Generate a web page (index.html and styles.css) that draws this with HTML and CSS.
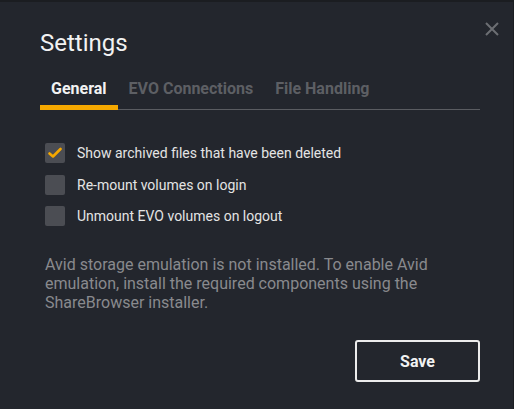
FILE: index.html
```html
<!DOCTYPE html>
<html lang="en">
<head>
  <meta charset="UTF-8">
  <title>Settings</title>
  <link rel="stylesheet" href="styles.css">
</head>
<body>

  <div class="dialog">
    <button class="close-btn" aria-label="Close">
      <svg width="14" height="14" viewBox="0 0 14 14"><path d="M1 1L13 13M13 1L1 13" stroke="#6c6e73" stroke-width="2" fill="none"/></svg>
    </button>

    <h1>Settings</h1>

    <!-- Tabs -->
    <div class="tabs">
      <span class="tab active">General</span>
      <span class="tab">EVO Connections</span>
      <span class="tab">File Handling</span>
    </div>

    <!-- Options -->
    <div class="options">
      <label class="option">
        <span class="box checked">
          <svg width="14" height="12" viewBox="0 0 14 12"><path d="M1.5 6.5L5 9.5L12.5 2" stroke="#f5a800" stroke-width="2.6" fill="none" stroke-linecap="round" stroke-linejoin="round"/></svg>
        </span>
        Show archived files that have been deleted
      </label>
      <label class="option"><span class="box"></span>Re-mount volumes on login</label>
      <label class="option"><span class="box"></span>Unmount EVO volumes on logout</label>
    </div>

    <p class="note">Avid storage emulation is not installed. To enable Avid emulation, install the required components using the ShareBrowser installer.</p>

    <div class="footer">
      <button class="save-btn">Save</button>
    </div>
  </div>

</body>
</html>
```

FILE: styles.css
```css
body {
  margin: 0;
  background: #1b1d21;
  font-family: Roboto, "Liberation Sans", sans-serif;
  width: 514px;
  height: 409px;
  overflow: hidden;
}
.dialog {
  position: relative;
  margin-top: 2px;
  width: 513px;
  height: 407px;
  background: #23262d;
  padding: 26px 33px 0 40px;
  box-sizing: border-box;
}
.close-btn {
  position: absolute;
  top: 20px;
  right: 14px;
  background: none;
  border: none;
  padding: 0;
  cursor: pointer;
}
h1 {
  margin: 0;
  font-size: 24px;
  font-weight: 400;
  color: #f2f2f2;
  line-height: 30px;
}
.tabs {
  display: flex;
  gap: 22px;
  margin-top: 21px;
  border-bottom: 1px solid #5a5c61;
  padding-left: 11px;
}
.tab {
  font-size: 16px;
  font-weight: 700;
  color: #5d5f64;
  padding-bottom: 10px;
  line-height: 20px;
}
.tab.active {
  color: #f2f2f2;
  position: relative;
}
.tab.active::after {
  content: "";
  position: absolute;
  left: -11px;
  right: -11px;
  bottom: -1px;
  height: 5px;
  background: #f5a800;
}
.options {
  display: flex;
  flex-direction: column;
  gap: 11.5px;
  margin-top: 33px;
  padding-left: 5px;
}
.option {
  display: flex;
  align-items: center;
  gap: 12px;
  font-size: 14px;
  color: #e4e4e4;
  height: 20px;
}
.box {
  width: 20px;
  height: 20px;
  border-radius: 2px;
  background: #4b4d53;
  display: flex;
  align-items: center;
  justify-content: center;
}
.note {
  margin: 29px 0 0 5px;
  font-size: 16px;
  line-height: 19px;
  color: #898a8e;
}
.footer {
  display: flex;
  justify-content: flex-end;
  margin-top: 28px;
}
.save-btn {
  width: 125px;
  height: 42px;
  background: transparent;
  border: 2px solid #ececec;
  border-radius: 3px;
  color: #f2f2f2;
  font-family: Roboto, "Liberation Sans", sans-serif;
  font-size: 16px;
  font-weight: 700;
  cursor: pointer;
}
```
